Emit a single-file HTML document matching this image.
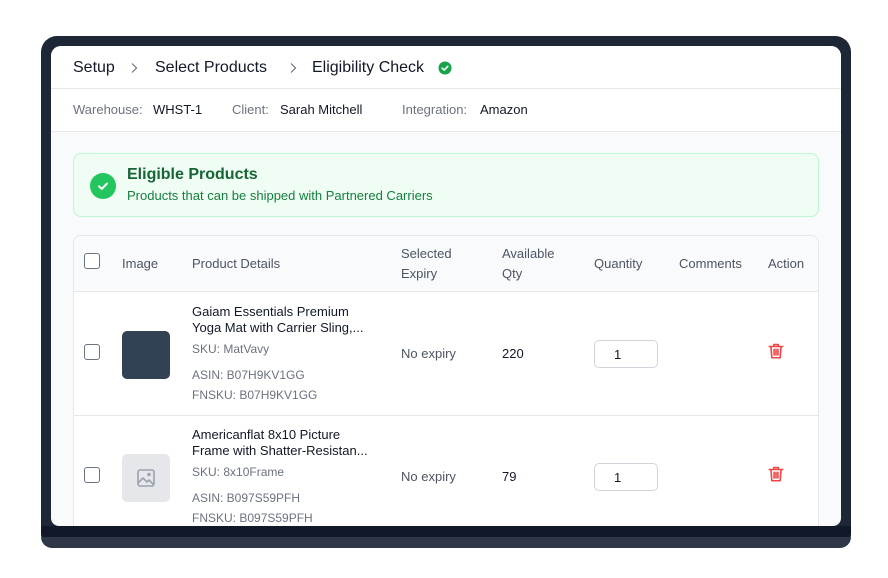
<!DOCTYPE html>
<html><head><style>
*{box-sizing:border-box;margin:0;padding:0}
body{width:888px;height:578px;background:#fff;font-family:"Liberation Sans",sans-serif;position:relative;overflow:hidden;color:#111827}
.a{position:absolute}
.frame{left:41px;top:36px;width:810px;height:512px;background:#1e2736;border-radius:16px}
.base{left:41px;top:526px;width:810px;height:22px;background:#111827;border-radius:0 0 14px 14px}
.base2{left:41px;top:537px;width:810px;height:11px;background:#2d3748;border-radius:0 0 12px 12px}
.screen{left:51px;top:46px;width:790px;height:480px;background:#f8fafc;border-radius:10px 10px 8px 8px;overflow:hidden}
.hdr{left:0;top:0;width:790px;height:43px;background:#fff;border-bottom:1px solid #e5e7eb}
.info{left:0;top:43px;width:790px;height:43px;background:#fff;border-bottom:1px solid #e5e7eb}
.t16{font-size:16px;color:#111827}
.lab{font-size:13px;color:#6b7280}
.val{font-size:13px;color:#111827}
.green{left:22px;top:107px;width:746px;height:64px;background:#effdf4;border:1px solid #bbf7d0;border-radius:8px}
.tbl{left:22px;top:189px;width:746px;height:320px;background:#fff;border:1px solid #e5e7eb;border-radius:8px;overflow:hidden}
.th{font-size:13px;color:#4b5563;line-height:20px}
.cb{width:16px;height:16px;border:1.5px solid #6b7280;border-radius:3px;background:#fff}
.pt{font-size:13px;color:#111827;line-height:16px}
.sm{font-size:12px;color:#6b7280}
.qty{width:64px;height:28px;border:1px solid #d1d5db;border-radius:5px;background:#fff;font-size:13px;padding:6px 0 0 19px}
</style></head><body>
<div class="a frame"></div>
<div class="a base"></div>
<div class="a base2"></div>
<div class="a screen">
  <div class="a hdr">
    <div class="a t16" style="left:22px;top:13px">Setup</div>
    <svg class="a" style="left:78px;top:15px" width="10" height="14" viewBox="0 0 10 14"><path d="M3 2.5l4.5 4.5L3 11.5" stroke="#6b7280" stroke-width="1.2" fill="none"/></svg>
    <div class="a t16" style="left:104px;top:13px">Select Products</div>
    <svg class="a" style="left:237px;top:15px" width="10" height="14" viewBox="0 0 10 14"><path d="M3 2.5l4.5 4.5L3 11.5" stroke="#6b7280" stroke-width="1.2" fill="none"/></svg>
    <div class="a t16" style="left:261px;top:13px">Eligibility Check</div>
    <svg class="a" style="left:387px;top:15px" width="14" height="14" viewBox="0 0 14 14"><circle cx="7" cy="7" r="6.5" fill="#16a34a"/><path d="M4.2 7.2l2 1.9 3.6-3.8" stroke="#fff" stroke-width="1.6" fill="none" stroke-linecap="round" stroke-linejoin="round"/></svg>
  </div>
  <div class="a info">
    <div class="a lab" style="left:22px;top:13px">Warehouse:</div>
    <div class="a val" style="left:102px;top:13px">WHST-1</div>
    <div class="a lab" style="left:181px;top:13px">Client:</div>
    <div class="a val" style="left:229px;top:13px">Sarah Mitchell</div>
    <div class="a lab" style="left:351px;top:13px">Integration:</div>
    <div class="a val" style="left:429px;top:13px">Amazon</div>
  </div>
  <div class="a green">
    <svg class="a" style="left:16px;top:19px" width="26" height="26" viewBox="0 0 26 26"><circle cx="13" cy="13" r="13" fill="#22c55e"/><path d="M9 13.3l2.8 2.6 5.2-5.4" stroke="#fff" stroke-width="2" fill="none" stroke-linecap="round" stroke-linejoin="round"/></svg>
    <div class="a" style="left:53px;top:12px;font-size:16px;font-weight:bold;color:#166534">Eligible Products</div>
    <div class="a" style="left:53px;top:34px;font-size:13px;color:#15803d">Products that can be shipped with Partnered Carriers</div>
  </div>
  <div class="a tbl">
    <div class="a" style="left:0;top:0;width:746px;height:56px;background:#f8fafc;border-bottom:1px solid #e5e7eb"></div>
    <div class="a cb" style="left:10px;top:17px"></div>
    <div class="a th" style="left:48px;top:18px">Image</div>
    <div class="a th" style="left:118px;top:18px">Product Details</div>
    <div class="a th" style="left:327px;top:8px">Selected<br>Expiry</div>
    <div class="a th" style="left:428px;top:8px">Available<br>Qty</div>
    <div class="a th" style="left:520px;top:18px">Quantity</div>
    <div class="a th" style="left:605px;top:18px">Comments</div>
    <div class="a th" style="left:694px;top:18px">Action</div>

    <div class="a" style="left:0;top:179px;width:746px;height:1px;background:#e5e7eb"></div>
    <div class="a cb" style="left:10px;top:108px"></div>
    <div class="a" style="left:48px;top:95px;width:48px;height:48px;background:#334155;border-radius:5px"></div>
    <div class="a pt" style="left:118px;top:68px">Gaiam Essentials Premium<br>Yoga Mat with Carrier Sling,...</div>
    <div class="a sm" style="left:118px;top:106px">SKU: MatVavy</div>
    <div class="a sm" style="left:118px;top:132px">ASIN: B07H9KV1GG</div>
    <div class="a sm" style="left:118px;top:152px">FNSKU: B07H9KV1GG</div>
    <div class="a" style="left:327px;top:110px;font-size:13px;color:#4b5563">No expiry</div>
    <div class="a" style="left:428px;top:110px;font-size:13px">220</div>
    <div class="a qty" style="left:520px;top:104px">1</div>
    <svg class="a" style="left:693px;top:106px" width="18" height="18" viewBox="0 0 16 16" fill="none" stroke="#ef4444" stroke-width="1.4" stroke-linecap="round" stroke-linejoin="round"><path d="M2 4h12M6 4V2.2h4V4M3.5 4l.8 10h7.4l.8-10M6.3 6.5v5M9.7 6.5v5M8 6.5v5"/></svg>
    <div class="a cb" style="left:10px;top:231px"></div>
    <div class="a" style="left:48px;top:218px;width:48px;height:48px;background:#e5e7eb;border-radius:5px"></div>
    <svg class="a" style="left:62px;top:232px" width="20" height="20" viewBox="0 0 20 20" fill="none" stroke="#9ca3af" stroke-width="1.6" stroke-linejoin="round"><rect x="2" y="2" width="16" height="16" rx="2"/><path d="M2 15l5-5 4 4 2-2 5 5"/><circle cx="13" cy="6.5" r="1" fill="#9ca3af"/></svg>
    <div class="a pt" style="left:118px;top:191px">Americanflat 8x10 Picture<br>Frame with Shatter-Resistan...</div>
    <div class="a sm" style="left:118px;top:229px">SKU: 8x10Frame</div>
    <div class="a sm" style="left:118px;top:255px">ASIN: B097S59PFH</div>
    <div class="a sm" style="left:118px;top:275px">FNSKU: B097S59PFH</div>
    <div class="a" style="left:327px;top:233px;font-size:13px;color:#4b5563">No expiry</div>
    <div class="a" style="left:428px;top:233px;font-size:13px">79</div>
    <div class="a qty" style="left:520px;top:227px">1</div>
    <svg class="a" style="left:693px;top:229px" width="18" height="18" viewBox="0 0 16 16" fill="none" stroke="#ef4444" stroke-width="1.4" stroke-linecap="round" stroke-linejoin="round"><path d="M2 4h12M6 4V2.2h4V4M3.5 4l.8 10h7.4l.8-10M6.3 6.5v5M9.7 6.5v5M8 6.5v5"/></svg>
  </div>
</div>
</body></html>
